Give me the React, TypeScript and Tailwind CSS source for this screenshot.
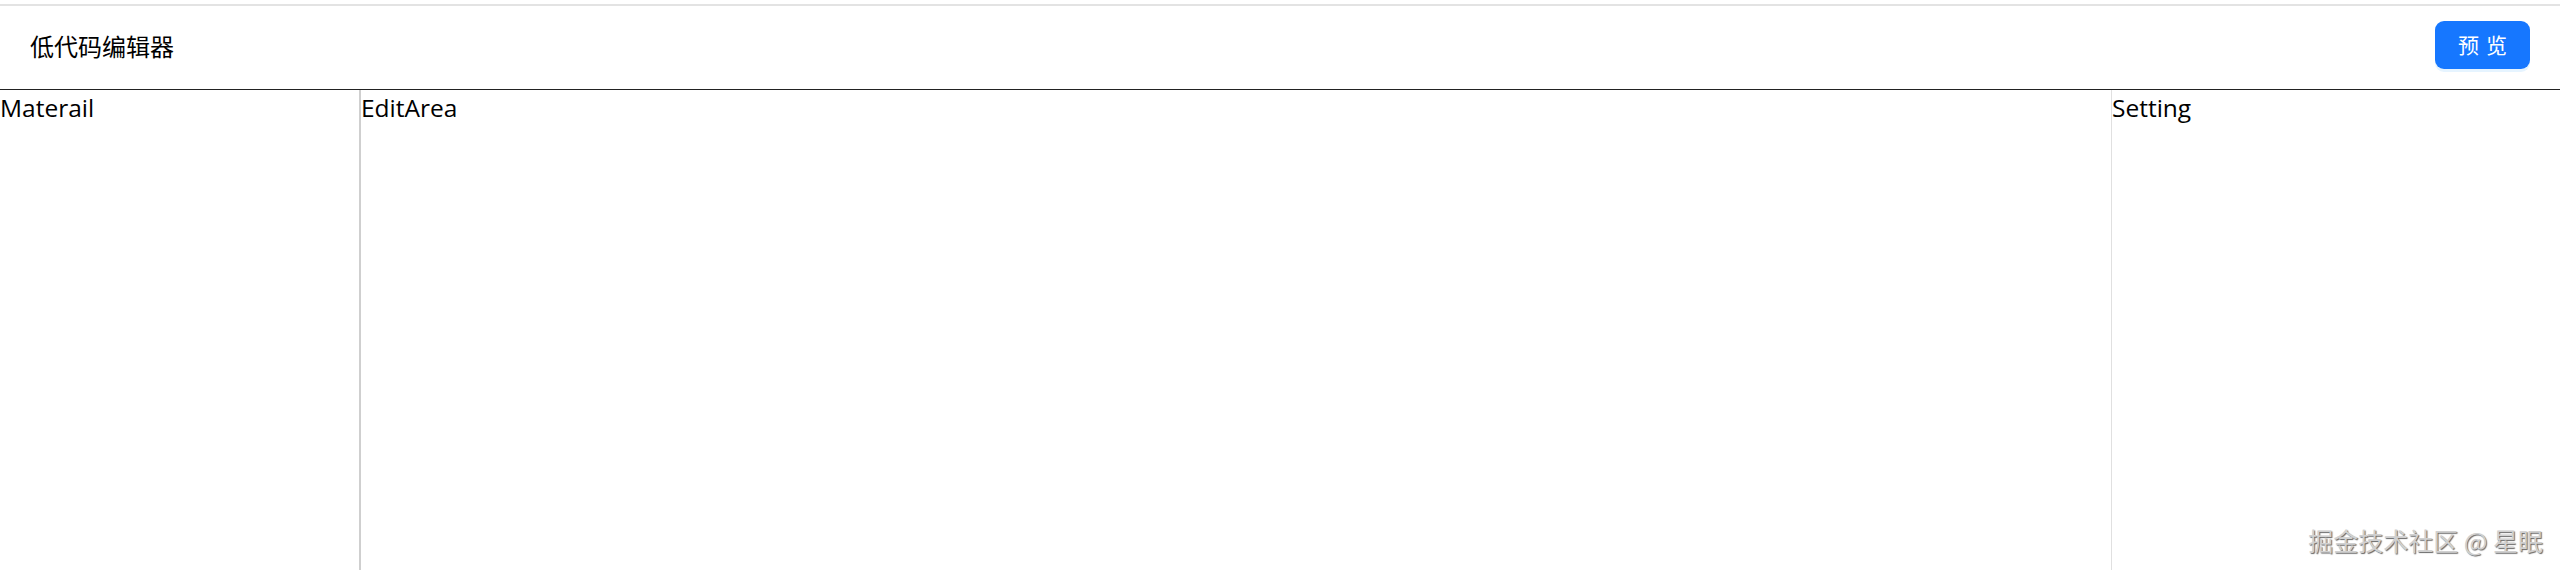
export default function App() {
  return (
    <div
      className="relative flex flex-col h-[570px] w-full bg-white text-black overflow-hidden"
      style={{ fontFamily: '"Open Sans", "Noto Sans CJK SC", sans-serif' }}
    >
      {/* top strip */}
      <div className="h-[4px] bg-white" />
      <div className="h-[2px] bg-[#e3e3e3]" />

      {/* Header */}
      <header className="h-[84px] flex items-center justify-between px-[30px] border-b border-[#222]">
        <h1 className="text-[24px] font-normal font-['Noto_Sans_CJK_SC',sans-serif] -mt-[4px]">
          低代码编辑器
        </h1>
        <button className="h-[48px] w-[95px] -mt-[6px] rounded-[9px] bg-[#1677ff] text-white text-[21px] font-['Noto_Sans_CJK_SC',sans-serif] shadow-[0_3px_0_rgba(5,145,255,0.1)]">
          <span className="tracking-[0.34em] mr-[-0.34em]">预览</span>
        </button>
      </header>

      {/* Panels */}
      <div className="flex flex-1 min-h-0 text-[24.5px] leading-[36px]">
        <div className="w-[361px] border-r-2 border-[#cfcfcf]">Materail</div>
        <div className="flex-1 border-r border-[#e0e0e0]">EditArea</div>
        <div className="w-[448px]">Setting</div>
      </div>

      {/* watermark */}
      <div className="absolute right-[17px] bottom-[17px] text-[25px] leading-none text-[#d0d0d0] font-['Noto_Sans_CJK_SC',sans-serif] [text-shadow:1px_1px_1px_#666]">
        掘金技术社区 @ 星眠
      </div>
    </div>
  );
}
